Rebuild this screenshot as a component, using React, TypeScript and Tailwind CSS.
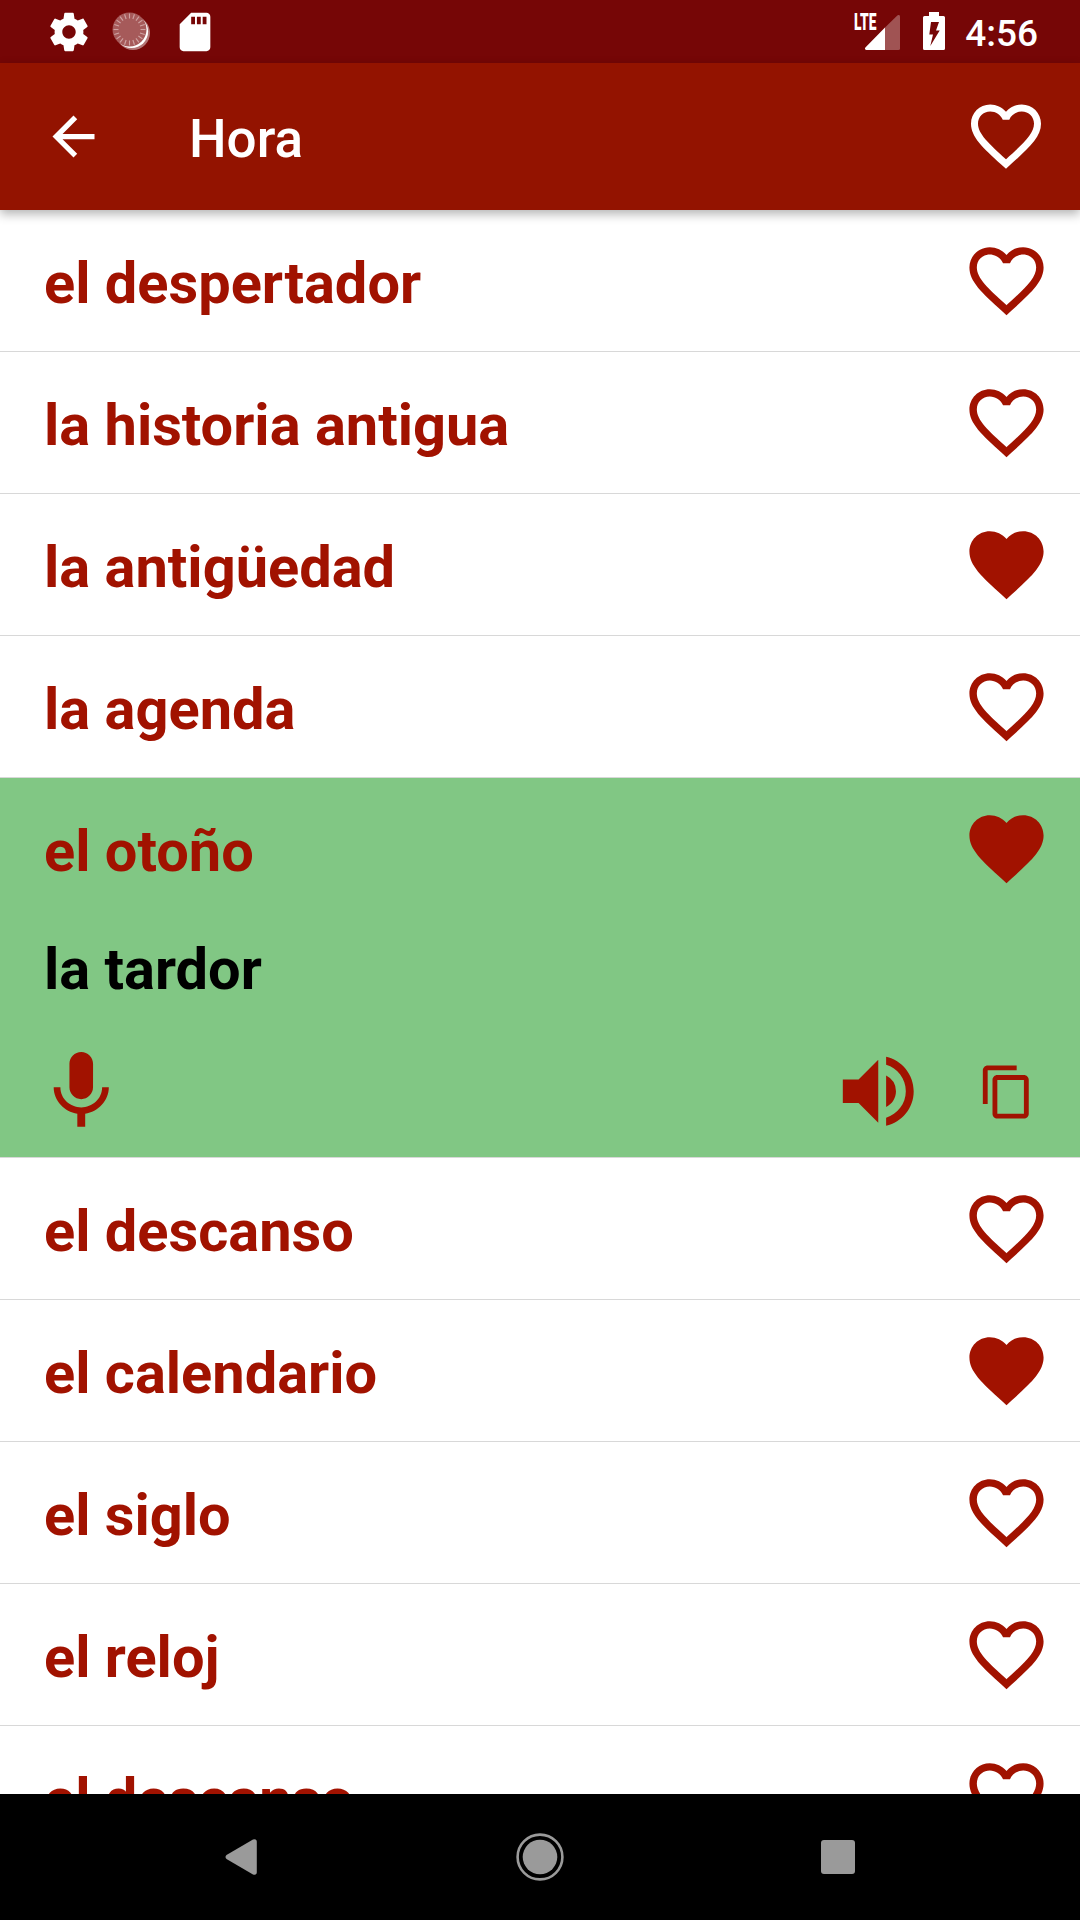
import { useState } from 'react'
import { MdArrowBack, MdContentCopy, MdFavorite, MdFavoriteBorder, MdMic, MdSdCard, MdVolumeUp } from 'react-icons/md'

interface Word {
  id: number
  text: string
  translation?: string
  favorite: boolean
}

const initialWords: Word[] = [
  { id: 1, text: 'el despertador', favorite: false },
  { id: 2, text: 'la historia antigua', favorite: false },
  { id: 3, text: 'la antigüedad', favorite: true },
  { id: 4, text: 'la agenda', favorite: false },
  { id: 5, text: 'el otoño', translation: 'la tardor', favorite: true },
  { id: 6, text: 'el descanso', favorite: false },
  { id: 7, text: 'el calendario', favorite: true },
  { id: 8, text: 'el siglo', favorite: false },
  { id: 9, text: 'el reloj', favorite: false },
  { id: 10, text: 'el descanso', favorite: false },
]

const spokes = Array.from({ length: 20 }, (_, i) => i * 18)

function StatusBar() {
  return (
    <div className="flex h-[63px] shrink-0 items-start bg-[#760606] pl-[45.5px] pr-[42px] text-white">
      <svg viewBox="0 0 24 24" className="mt-[8.5px] size-[46px]" fill="currentColor">
        <path d="M19.43 12.98c.04-.32.07-.64.07-.98s-.03-.66-.07-.98l2.11-1.65c.19-.15.24-.42.12-.64l-2-3.46c-.12-.22-.39-.3-.61-.22l-2.49 1c-.52-.4-1.08-.73-1.69-.98l-.38-2.65C14.46 2.18 14.25 2 14 2h-4c-.25 0-.46.18-.49.42l-.38 2.65c-.61.25-1.17.59-1.69.98l-2.49-1c-.23-.09-.49 0-.61.22l-2 3.46c-.13.22-.07.49.12.64l2.11 1.65c-.04.32-.07.65-.07.98s.03.66.07.98l-2.11 1.65c-.19.15-.24.42-.12.64l2 3.46c.12.22.39.3.61.22l2.49-1c.52.4 1.08.73 1.69.98l.38 2.65c.03.24.24.42.49.42h4c.25 0 .46-.18.49-.42l.38-2.65c.61-.25 1.17-.59 1.69-.98l2.49 1c.23.09.49 0 .61-.22l2-3.46c.12-.22.07-.49-.12-.64l-2.11-1.65zM12 15.5c-1.93 0-3.5-1.57-3.5-3.5s1.57-3.5 3.5-3.5 3.5 1.57 3.5 3.5-1.57 3.5-3.5 3.5z" />
      </svg>
      <svg viewBox="0 0 40 40" className="ml-[19.5px] mt-[11px] size-[40px]">
        <circle cx="22" cy="22" r="17" fill="#fff" fillOpacity="0.45" />
        <circle cx="20.5" cy="20.5" r="16.6" fill="#fff" />
        <circle cx="18.5" cy="18.5" r="17" fill="#a65a5a" />
        {spokes.map((angle) => (
          <path key={angle} d="M18.5 2.5v5" stroke="#cfa3a3" strokeWidth="1.1" transform={`rotate(${angle} 18.5 18.5)`} />
        ))}
      </svg>
      <MdSdCard className="ml-[20.5px] mt-[8.5px] size-[46px]" />
      <div className="relative ml-auto mt-[12px] h-[40px] w-[47px]">
        <svg viewBox="0 0 47 40" className="h-[40px] w-[47px]" fill="currentColor">
          <path d="M32 15.5V38H13.5a1.5 1.5 0 0 1-1.1-2.6z" />
          <path d="M32 15.5 44.3 3.4A1.6 1.6 0 0 1 47 4.5v32a1.5 1.5 0 0 1-1.5 1.5H32z" fillOpacity="0.31" />
        </svg>
        <span className="absolute left-px top-[-1px] origin-left scale-x-[0.6] text-[23px] leading-[24px] font-black">LTE</span>
      </div>
      <svg viewBox="0 0 22 38" className="ml-[23px] mt-[12px] h-[38px] w-[22px]" fill="currentColor" fillRule="evenodd">
        <path d="M6 0h10v4h4.5A1.5 1.5 0 0 1 22 5.5v31a1.5 1.5 0 0 1-1.5 1.5h-19a1.5 1.5 0 0 1-1.5-1.5v-31a1.5 1.5 0 0 1 1.5-1.5H6zM8 10 6.3 22.5H10L7.3 34l9.4-15.5H13L16 10z" />
      </svg>
      <span className="ml-[20.5px] mt-[12px] text-[37px] leading-[44px] font-medium">4:56</span>
    </div>
  )
}

function NavigationBar() {
  return (
    <div className="flex h-[126px] shrink-0 items-center justify-between bg-black px-[225px] text-[#9a9a9a]">
      <svg viewBox="0 0 32 36" className="h-[36px] w-[32px]" fill="currentColor">
        <path d="M1.5 16 28 .5Q31.8-.6 31.8 3v30q0 3.6-3.8 2.5L1.5 20Q-.5 18 1.5 16z" />
      </svg>
      <svg viewBox="0 0 48 48" className="mb-[1px] ml-[1px] size-[48px]" fill="currentColor">
        <circle cx="24" cy="24" r="22.4" fill="none" stroke="currentColor" strokeWidth="2.6" />
        <circle cx="24" cy="24" r="17.3" />
      </svg>
      <div className="size-[34px] rounded-[3px] bg-[#9a9a9a]" />
    </div>
  )
}

interface WordRowProps {
  word: Word
  onToggle: (id: number) => void
}

function WordRow({ word, onToggle }: WordRowProps) {
  return (
    <li className={`shrink-0 border-b border-[#d8d8d8] ${word.translation ? 'bg-[#81c784]' : 'bg-white'}`}>
      <div className="flex h-[141px] items-center justify-between pl-[44px] pr-[29px]">
        <span className="pt-[4px] text-[57.75px] leading-[68px] font-bold">{word.text}</span>
        <button onClick={() => onToggle(word.id)}>
          {word.favorite ? <MdFavorite className="size-[89px]" /> : <MdFavoriteBorder className="size-[89px]" />}
        </button>
      </div>
      {word.translation && (
        <>
          <div className="h-[118px] pl-[44px] pt-[16px] text-[57.75px] leading-[68px] font-bold text-black">
            {word.translation}
          </div>
          <div className="flex h-[120px] items-start pl-[33.5px] pr-[44px] pt-[7px]">
            <button>
              <MdMic className="size-[94.5px]" />
            </button>
            <button className="ml-auto">
              <MdVolumeUp className="size-[94.5px]" />
            </button>
            <button className="ml-[52.5px] mt-[18.5px]">
              <MdContentCopy className="size-[58px]" />
            </button>
          </div>
        </>
      )}
    </li>
  )
}

export default function App() {
  const [words, setWords] = useState<Word[]>(initialWords)

  const toggleFavorite = (id: number) => {
    setWords(words.map((w) => (w.id === id ? { ...w, favorite: !w.favorite } : w)))
  }

  return (
    <div className="flex h-[1920px] w-[1080px] flex-col overflow-hidden bg-white font-['Roboto',sans-serif]">
      <StatusBar />

      {/* App bar */}
      <header className="z-10 flex h-[147px] shrink-0 items-center bg-[#931300] pl-[42px] pr-[32px] text-white shadow-[0_4px_10px_rgba(0,0,0,0.3)]">
        <MdArrowBack className="size-[63px]" />
        <h1 className="ml-[84px] pt-[4px] text-[53px] leading-[62px] font-medium">Hora</h1>
        <MdFavoriteBorder className="mb-[2px] ml-auto size-[84px]" />
      </header>

      {/* Word list */}
      <ul className="flex min-h-0 flex-1 flex-col overflow-hidden text-[#a11200]">
        {words.map((word) => (
          <WordRow key={word.id} word={word} onToggle={toggleFavorite} />
        ))}
      </ul>

      <NavigationBar />
    </div>
  )
}
